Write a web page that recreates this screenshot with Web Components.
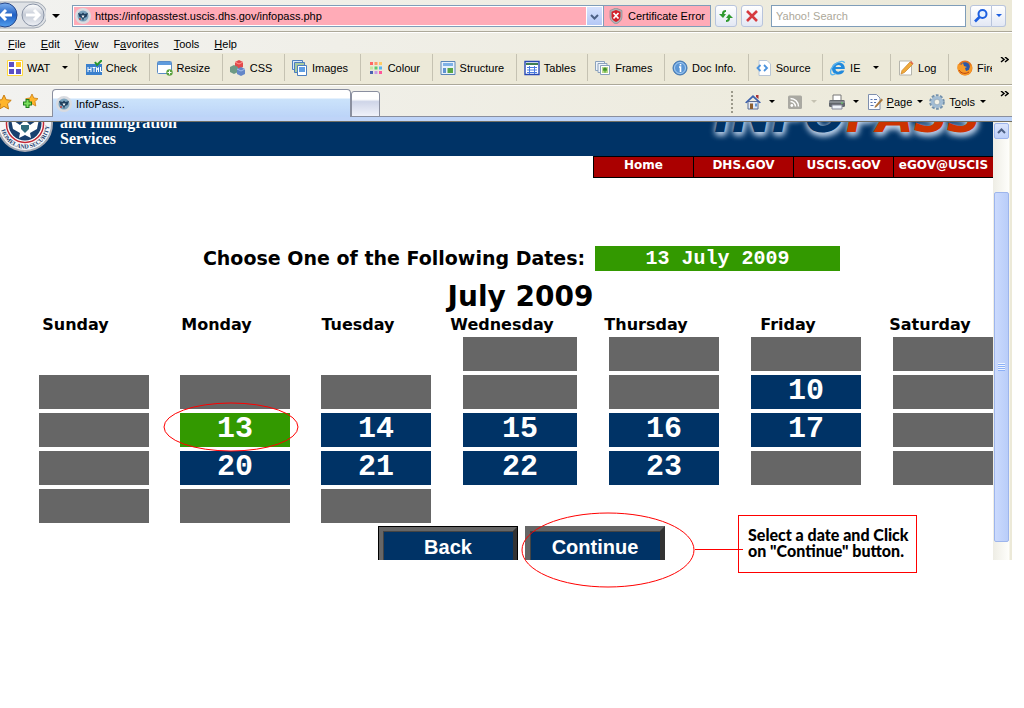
<!DOCTYPE html>
<html lang="en">
<head>
<meta charset="utf-8">
<title>InfoPass..</title>
<style>
  body {
    margin: 0;
    background: #fff;
    color: #000;
    font: 11px/14px "Liberation Sans", Arial, sans-serif;
  }
</style>
</head>
<body>
<info-window></info-window>

<script>
const ICONS = {
  seal: `<circle cx="8" cy="8" r="8" fill="#d9dbe0"/><circle cx="8" cy="8" r="5.500" fill="#7ba3bd"/><path d="M3 5l3.500 1L8 4.500 9.500 6 13 5l-1.500 4L9 10l-1 3-1-3-2.500-1z" fill="#20405f"/><path d="M6.500 7.500h3L8 10z" fill="#fff"/><circle cx="5" cy="11" r="1" fill="#b44"/>`,
  shield: `<path d="M8 0l6 2.500v6c0 3.500-2.500 6-6 7.500-3.500-1.500-6-4-6-7.500v-6z" fill="#aeb4b8" stroke="#7d858a" stroke-width=".6"/><path d="M8 2l4.500 1.800v4.500c0 2.700-1.800 4.600-4.500 5.700-2.700-1.100-4.500-3-4.500-5.700V3.800z" fill="#d2202b"/><path d="M5.500 5l5 5.500m0-5.500l-5 5.500" stroke="#fff" stroke-width="1.800"/>`,
  refresh: `<path d="M4 8V5.500C4 3 5.500 2 8 2v2c-1.300 0-1.800.6-1.800 1.800V6H8L5 10 1 6h3z" fill="#2f9a2f"/><path d="M12 7v3.500c0 2.500-1.500 3.500-4 3.500v-2c1.300 0 1.800-.6 1.800-1.800V10H8l3-4 4 4h-3z" fill="#2f9a2f"/>`,
  stop: `<path d="M3 3l10 10M13 3L3 13" stroke="#d63b40" stroke-width="2.600"/>`,
  search: `<circle cx="9.500" cy="6" r="4" fill="#e7f2ff" stroke="#1d5fe0" stroke-width="2"/><path d="M6.500 9L2 13.500" stroke="#1d5fe0" stroke-width="2.600"/>`,
  wat: `<path d="M.5.5h15v15H.5z" fill="#fff" stroke="#ffd83d"/><path d="M2 2h5v5H2zM9 9h5v5H9z" fill="#5c4fc4"/><path d="M9 2h5v5H9z" fill="#ffc629"/><path d="M2 9h5v5H2z" fill="#5c4fc4"/>`,
  check: `<path d="M0 4h16v11H0z" fill="#3a80cd"/><path d="M2 7v5m3-5v5M2 9.500h3M6.500 7.500h3M8 7v5m2.500 0V7.500l1 2 1-2V12m2-5v4.500H16" stroke="#fff" fill="none"/><path d="M9 2l2 3 5-5" stroke="#29962e" stroke-width="2" fill="none"/>`,
  resize: `<rect x=".5" y="1.500" width="14" height="12" rx="1" fill="#fff" stroke="#5b8cc6"/><path d="M1 2h13v3H1z" fill="#5f9bdc"/><circle cx="12.500" cy="12.500" r="3.200" fill="#5aa23d"/><path d="M12.500 10.500v4m-2-2h4" stroke="#fff"/>`,
  css: `<path d="M5 2l4-2 4 2v5L9 9 5 7z" fill="#e34a4a"/><path d="M0 7l4-2 4 2v5l-4 2-4-2z" fill="#6d9a85"/><path d="M7 9l4-2 4 2v5l-4 2-4-2z" fill="#6487c8"/><path d="M5 2l4 2 4-2" stroke="#ff9b94" fill="none"/><path d="M7 9l4 2 4-2" stroke="#a6bfeb" fill="none"/>`,
  images: `<path d="M.5.500h10v9H.5z" fill="#d9e9fa" stroke="#4c7fbf"/><path d="M2.500 2.500h10v10h-10z" fill="#a9ca9f" stroke="#4c7fbf"/><path d="M5.500 5.500h9v10h-9z" fill="#fff" stroke="#4c7fbf"/><path d="M7 7h6v5H7z" fill="#5f9ee4"/>`,
  colour: `<path d="M2 2h3v3H2z" fill="#f66"/><path d="M6.500 2h3v3h-3z" fill="#f96"/><path d="M11 2h3v3h-3z" fill="#fc6"/><path d="M2 6.500h3v3H2z" fill="#c6e6a0"/><path d="M6.500 6.500h3v3h-3z" fill="#5ccb6b"/><path d="M11 6.500h3v3h-3z" fill="#58b4f0"/><path d="M2 11h3v3H2z" fill="#4a63b0"/><path d="M6.500 11h3v3h-3z" fill="#c99ae6"/><path d="M11 11h3v3h-3z" fill="#f59"/>`,
  structure: `<path d="M1 1.500h14v13H1z" fill="#e8f1fb" stroke="#5b86b8"/><path d="M3 3h10v3H3z" fill="#7fb1e6"/><path d="M3 8h3v5H3z" fill="#5f93d0"/><path d="M7.500 8H13v5H7.500z" fill="#5aa646"/>`,
  tables: `<path d="M1 1.500h14v13H1z" fill="#fff" stroke="#2748b5" stroke-width="1.400"/><path d="M2 3h12v2H2z" fill="#3f7d52"/><path d="M3 7.500h10M3 10h10M3 12.500h10M5.500 6v8M10.500 6v8" stroke="#4a7be0"/>`,
  frames: `<path d="M.5 1.500h9v9h-9z" fill="#eef3f9" stroke="#8ba2bd"/><path d="M3 3.500h9v9H3z" fill="#eef3f9" stroke="#8ba2bd"/><path d="M5.500 5.500h9v9h-9z" fill="#fff" stroke="#8ba2bd"/><path d="M7 7h6v6H7z" fill="#b9d88b"/><circle cx="10" cy="9.500" r="2" fill="#3f8f2f"/><path d="M10 10v3" stroke="#6b4"/>`,
  info: `<circle cx="8" cy="8" r="7" fill="#5c97d6" stroke="#3f73ad"/><circle cx="8" cy="8" r="5.500" fill="none" stroke="#a9cdf0"/><path d="M7 7h1.500v5M8.500 4v1.500" stroke="#fff" stroke-width="1.600" fill="none"/>`,
  source: `<path d="M3 .5h8l3.500 3.500v11.500H3z" fill="#fff" stroke="#b9c6d6"/><path d="M4.500 5L1.500 8l3 3M8 5l3 3-3 3" stroke="#4b93dd" stroke-width="1.800" fill="none"/>`,
  ie: `<path d="M14.800 9H5.500c.2 1.800 1.300 2.700 2.900 2.700 1.100 0 1.900-.4 2.400-1.200h3.600c-.9 2.600-3 4-6.100 4C4.500 14.500 2 12.200 2 8.500 2 5 4.600 2.500 8.400 2.500c4.300 0 6.600 2.500 6.400 6.500zM5.600 7h5.600c-.2-1.300-1.200-2.100-2.700-2.100S5.900 5.700 5.600 7z" fill="#2189dc"/><path d="M14.500 3C14 .5 10 1 6 3.500S-.5 11 1 14c1 1.500 3.500.5 5-.5" stroke="#5bb5ee" stroke-width="1.400" fill="none"/>`,
  log: `<path d="M1.500 1h12v14h-12z" fill="#fff" stroke="#b5b5ad"/><path d="M4 10.500L12 2l2.500 2.500-8 8L3 14z" fill="#f0aa3c" stroke="#c78326" stroke-width=".7"/><path d="M12 2l1-1 2.500 2.500-1 1z" fill="#e6664f"/>`,
  firefox: `<circle cx="8" cy="8" r="7.500" fill="#e2711d"/><circle cx="8" cy="7" r="4.800" fill="#2d58a5"/><path d="M1 4l3 1 2-2 1 3 3 1-2 1 1 3 3-1 2-6c2 4 1 8-2 10.500-3 1.500-7 1-9.500-2S0 6 1 4z" fill="#f79a28"/><path d="M2 10c2 4 7 4 10 2" stroke="#b8400e" fill="none"/>`,
  star: `<path d="M8 1l2.200 4.700 5 .6-3.700 3.500 1 5.200L8 12.400 3.500 15l1-5.200L.8 6.300l5-.6z" fill="#ffb52b" stroke="#c97e14"/>`,
  addstar: `<path d="M10 0l1.800 4 4.200.6-3 3 .8 4.400L10 9.800 6 12l.8-4.400-3-3L8 4z" fill="#ffb52b" stroke="#c97e14" stroke-width=".8"/><path d="M5.500 5v9M1 9.500h9" stroke="#1d7d1d" stroke-width="4"/><path d="M5.500 6v7M2 9.500h7" stroke="#7be05c" stroke-width="2"/>`,
  home: `<path d="M3 7.500h10V15H3z" fill="#e4eaf5" stroke="#5d6f94"/><path d="M0 8.500L8 1l8 7.500-1.500.8L8 3.500 1.500 9.300z" fill="#3e62ad"/><path d="M11 1h2.500v4L11 3z" fill="#a33"/><path d="M5 9.500h3V15H5z" fill="#8d5f30"/><path d="M10 9.500h2v3h-2z" fill="#5d95d8"/>`,
  feed: `<rect x="1" y="1.500" width="14" height="13.500" rx="1.500" fill="#aaa9a2"/><circle cx="4.800" cy="11.500" r="1.400" fill="#fff"/><path d="M3.500 7.500a5 5 0 0 1 5 5M3.500 4.500a8 8 0 0 1 8 8" stroke="#fff" stroke-width="1.500" fill="none"/>`,
  printer: `<path d="M4 1h8v6H4z" fill="#fff" stroke="#777"/><rect x="0" y="6" width="16" height="7" rx="1.500" fill="#62666c"/><path d="M0 8h16" stroke="#a9adb3"/><path d="M3 11h10v4H3z" fill="#eef2f8" stroke="#889"/><path d="M12 9h2" stroke="#6d6"/>`,
  page: `<path d="M1.500.5h8L13 4v11.500H1.500z" fill="#fbfcff" stroke="#7e8fae"/><path d="M3.500 5.500h2m1.500 0h3M3.500 8.500h2m1.500 0h2M3.500 11.500h3" stroke="#5a76b0" stroke-width="1.200"/><path d="M8 12l6.500-7.500 1.500 1.500-6.500 7L7.500 14z" fill="#a9773c"/>`,
  gear: `<circle cx="8" cy="8" r="6.500" fill="none" stroke="#7592ad" stroke-width="2.600" stroke-dasharray="2.700 1.400"/><circle cx="8" cy="8" r="4.400" fill="none" stroke="#a3bdd4" stroke-width="3.400"/><circle cx="8" cy="8" r="2.800" fill="#f3f1e6" stroke="#7592ad" stroke-width=".6"/>`,
};

class UiIcon extends HTMLElement {
  connectedCallback() {
    this.attachShadow({ mode: 'open' }).innerHTML = `
      <style>
        :host { display: block; flex: none; width: 16px; height: 16px; }
        svg { display: block; width: 100%; height: 100%; }
      </style>
      <svg viewBox="0 0 16 16" aria-hidden="true">${ICONS[this.getAttribute('name')] || ''}</svg>
    `;
  }
}

class DropArrow extends HTMLElement {
  connectedCallback() {
    this.attachShadow({ mode: 'open' }).innerHTML = `
      <style>
        :host {
          display: block;
          flex: none;
          border: 3px solid transparent;
          border-top-color: currentColor;
          border-bottom: 0;
        }
      </style>
    `;
  }
}

class MoreChevron extends HTMLElement {
  connectedCallback() {
    this.attachShadow({ mode: 'open' }).innerHTML = `
      <style>
        :host { display: block; flex: none; width: 12px; height: 8px; }
        svg { display: block; }
      </style>
      <svg width="9" height="6" aria-hidden="true">
        <path d="M1 0l3 2.500L1 5M5 0l3 2.500L5 5" fill="none" stroke="#000" stroke-width="1.500"/>
      </svg>
    `;
  }
}

class ToolButton extends HTMLElement {
  connectedCallback() {
    const drop = this.hasAttribute('drop') ? '<drop-arrow></drop-arrow>' : '';
    const bare = this.childNodes.length === 0 ? 'bare' : '';
    this.attachShadow({ mode: 'open' }).innerHTML = `
      <style>
        :host { display: flex; }
        button {
          display: flex;
          align-items: center;
          gap: 4px;
          width: 100%;
          padding: 0;
          border: 0;
          background: none;
          color: inherit;
          font: inherit;
          white-space: nowrap;
        }
        .bare { gap: 0; }
        drop-arrow { margin-left: 8px; }
      </style>
      <button type="button" class="${bare}">
        <ui-icon name="${this.getAttribute('icon')}"></ui-icon>
        <slot></slot>${drop}
      </button>
    `;
  }
}

class AddressBar extends HTMLElement {
  connectedCallback() {
    this.attachShadow({ mode: 'open' }).innerHTML = `
      <style>
        :host {
          display: flex;
          align-items: center;
          height: 31px;
          padding-right: 6px;
          border-bottom: 1px solid #aca899;
        }
        .nav { flex: none; display: block; }
        .nav + drop-arrow { margin: 0 12px 0 6px; border-width: 4px 4px 0; }
        .box {
          flex: 1;
          display: flex;
          align-items: center;
          box-sizing: border-box;
          height: 22px;
          border: 1px solid #7f9db9;
          background: #ffabb7;
          box-shadow: inset 0 0 0 1px #fff;
          padding-left: 2px;
        }
        input { font: inherit; box-sizing: border-box; border-radius: 0; outline: 0; }
        .box input { flex: 1; min-width: 0; border: 0; background: none; padding: 0 4px; }
        .pick {
          width: 17px;
          height: 20px;
          padding: 0;
          border: 1px solid #fff;
          background: linear-gradient(#d6e2fd, #b4c8f6);
        }
        .cert {
          display: flex;
          align-items: center;
          gap: 4px;
          box-sizing: border-box;
          width: 107px;
          height: 22px;
          padding: 0 4px;
          border: 1px solid #7f9db9;
          border-left: 0;
          background: #ffabb7;
          font: inherit;
          white-space: nowrap;
        }
        .square {
          display: flex;
          align-items: center;
          justify-content: center;
          width: 22px;
          height: 22px;
          padding: 0;
          margin-left: 4px;
          border: 1px solid #b8c4dc;
          border-radius: 3px;
          background: linear-gradient(#fff, #e3e8f4);
        }
        .find { width: 195px; height: 22px; margin-left: 8px; padding: 0 4px; border: 1px solid #7f9db9; background: #fff; }
        .find::placeholder { color: #aca899; opacity: 1; }
        .left { border-radius: 3px 0 0 3px; }
        .right { width: 14px; margin: 0; border-left: 0; border-radius: 0 3px 3px 0; color: #1d5fe0; }
      </style>
      <svg class="nav" width="46" height="31" role="img" aria-label="Back and forward">
        <defs>
          <linearGradient id="b" x2="0" y2="1"><stop stop-color="#7fb0ee"/><stop offset=".5" stop-color="#1f5fc4"/><stop offset="1" stop-color="#53a0ee"/></linearGradient>
          <linearGradient id="f" x2="0" y2="1"><stop stop-color="#fff"/><stop offset=".5" stop-color="#c5cbd6"/><stop offset="1" stop-color="#eef1f6"/></linearGradient>
        </defs>
        <path d="M0 2h34a13 13 0 0 1 0 26H0z" fill="#dfe2e6" stroke="#a2a9b3"/>
        <circle cx="5" cy="15" r="12" fill="url(#b)" stroke="#27478a"/>
        <circle cx="33" cy="15" r="11" fill="url(#f)" stroke="#8993a5"/>
        <path d="M12 15H1m5-5l-5 5 5 5" fill="none" stroke="#fff" stroke-width="3"/>
        <path d="M26 15h13m-5-5l5 5-5 5" fill="none" stroke="#fff" stroke-width="3"/>
      </svg>
      <drop-arrow></drop-arrow>
      <div class="box">
        <ui-icon name="seal"></ui-icon>
        <input type="text" aria-label="Address" value="https://infopasstest.uscis.dhs.gov/infopass.php">
        <button class="pick" type="button" aria-label="Recent addresses">
          <svg width="9" height="6"><path d="M1 1l3.500 3.500L8 1" fill="none" stroke="#4d6185" stroke-width="2"/></svg>
        </button>
      </div>
      <button class="cert" type="button"><ui-icon name="shield"></ui-icon>Certificate Error</button>
      <button class="square" type="button" aria-label="Refresh"><ui-icon name="refresh"></ui-icon></button>
      <button class="square" type="button" aria-label="Stop"><ui-icon name="stop"></ui-icon></button>
      <input class="find" type="text" aria-label="Search" placeholder="Yahoo! Search">
      <button class="square left" type="button" aria-label="Search"><ui-icon name="search"></ui-icon></button>
      <button class="square right" type="button" aria-label="Search options"><drop-arrow></drop-arrow></button>
    `;
  }
}

class MenuBar extends HTMLElement {
  connectedCallback() {
    this.attachShadow({ mode: 'open' }).innerHTML = `
      <style>
        :host { display: flex; gap: 15px; box-sizing: border-box; height: 21px; padding: 1px 8px 0; border-top: 1px solid #fff; }
        button { padding: 0; border: 0; background: none; font: inherit; }
      </style>
      <button type="button"><u>F</u>ile</button>
      <button type="button"><u>E</u>dit</button>
      <button type="button"><u>V</u>iew</button>
      <button type="button">F<u>a</u>vorites</button>
      <button type="button"><u>T</u>ools</button>
      <button type="button"><u>H</u>elp</button>
    `;
  }
}

class DevToolbar extends HTMLElement {
  connectedCallback() {
    this.attachShadow({ mode: 'open' }).innerHTML = `
      <style>
        :host { display: flex; height: 31px; background: #ece9d8; border-bottom: 1px solid #aca899; }
        .items { flex: 1; display: flex; align-items: stretch; padding: 1px 0 3px; }
        .items tool-button { flex: 1 0 auto; padding: 0 6px 0 7px; border-right: 1px solid #c5c2b2; }
        .items tool-button:first-child { padding-right: 4px; }
        .last { width: 35px; margin-left: 8px; padding-bottom: 2px; overflow: hidden; }
        more-chevron { margin: 4px 0 0 8px; }
      </style>
      <div class="items">
        <tool-button icon="wat" drop>WAT</tool-button>
        <tool-button icon="check">Check</tool-button>
        <tool-button icon="resize">Resize</tool-button>
        <tool-button icon="css">CSS</tool-button>
        <tool-button icon="images">Images</tool-button>
        <tool-button icon="colour">Colour</tool-button>
        <tool-button icon="structure">Structure</tool-button>
        <tool-button icon="tables">Tables</tool-button>
        <tool-button icon="frames">Frames</tool-button>
        <tool-button icon="info">Doc Info.</tool-button>
        <tool-button icon="source">Source</tool-button>
        <tool-button icon="ie" drop>IE</tool-button>
        <tool-button icon="log">Log</tool-button>
      </div>
      <tool-button class="last" icon="firefox">Fire</tool-button>
      <more-chevron></more-chevron>
    `;
  }
}

class TabRow extends HTMLElement {
  connectedCallback() {
    this.attachShadow({ mode: 'open' }).innerHTML = `
      <style>
        :host {
          display: flex;
          align-items: stretch;
          height: 31px;
          border-top: 1px solid #fff;
          border-bottom: 4px solid #bfd4f8;
          box-shadow: inset 0 -1px #8a8f9f;
        }
        .stars { display: flex; align-items: center; gap: 10px; width: 52px; }
        .stars ui-icon:first-child { margin-left: -4px; }
        .tab {
          display: flex;
          align-items: center;
          gap: 4px;
          box-sizing: border-box;
          width: 299px;
          margin-top: 3px;
          padding: 0 3px;
          border: 1px solid #8a8f9f;
          border-bottom: 0;
          border-radius: 4px 4px 0 0;
          background: linear-gradient(#fff 0 8px, #cbe3fb 9px, #bcd4f8);
          font: inherit;
        }
        .new {
          box-sizing: border-box;
          width: 29px;
          margin: 5px 0 0;
          border: 1px solid #8a8f9f;
          border-radius: 3px 3px 0 0;
          background: linear-gradient(#fff 0 30%, #cfd5e8 40%, #f0f2fa);
        }
        .tools { display: flex; align-items: center; margin-left: auto; }
        .grip { width: 2px; height: 22px; margin-right: 12px; background: repeating-linear-gradient(#9c9a8c 0 2px, transparent 2px 4px); }
        .tools drop-arrow { margin: 0 12px 0 8px; }
        .tools .print { margin: 0 8px; }
        .tools .tight { margin: 0 6px 0 5px; }
        .tools .off { color: #c5c2b2; }
        more-chevron { margin: 5px 0 0 8px; }
      </style>
      <div class="stars"><ui-icon name="star"></ui-icon><ui-icon name="addstar"></ui-icon></div>
      <button class="tab" type="button"><ui-icon name="seal"></ui-icon>InfoPass..</button>
      <button class="new" type="button" aria-label="New tab"></button>
      <div class="tools">
        <span class="grip"></span>
        <tool-button icon="home" aria-label="Home"></tool-button><drop-arrow></drop-arrow>
        <tool-button icon="feed" aria-label="Feeds"></tool-button><drop-arrow class="off"></drop-arrow>
        <tool-button icon="printer" aria-label="Print"></tool-button><drop-arrow class="print"></drop-arrow>
        <tool-button icon="page"><span><u>P</u>age</span></tool-button><drop-arrow class="tight"></drop-arrow>
        <tool-button icon="gear"><span>T<u>o</u>ols</span></tool-button><drop-arrow class="tight"></drop-arrow>
      </div>
      <more-chevron></more-chevron>
    `;
  }
}

class SiteHeader extends HTMLElement {
  connectedCallback() {
    this.attachShadow({ mode: 'open' }).innerHTML = `
      <style>
        :host {
          display: flex;
          align-items: flex-end;
          height: 34px;
          overflow: hidden;
          background: #036;
          color: #fff;
        }
        svg { flex: none; display: block; margin: 0 6px 4px 0; }
        .agency { padding-bottom: 9px; font: bold 16px/16px "Liberation Serif", "Times New Roman", serif; }
        .brand {
          margin: 0 12px 0 auto;
          padding-bottom: 13px;
          font: italic bold 48px/56px "DejaVu Sans", Verdana, sans-serif;
          color: #036;
          text-shadow: 0 2px 6px #cfe0f5, 2px 3px 6px #9fb8d4;
        }
        .brand b { color: #c30; }
      </style>
      <svg width="54" height="56" role="img" aria-label="Homeland Security seal">
        <defs><path id="rim" d="M.5 28a24.500 24.500 0 0 0 49 0"/></defs>
        <circle cx="25" cy="28" r="28" fill="#a7abb5"/>
        <circle cx="25" cy="28" r="26" fill="#f5f6f8"/>
        <circle cx="25" cy="28" r="18.500" fill="#fff" stroke="#c22a36" stroke-width="1.500"/>
        <circle cx="25" cy="28" r="16.500" fill="#19406f"/>
        <path d="M25 24l5 5 9-6-2 10-7 4 1 5-6-3-6 3 1-5-7-4-2-10 9 6z" fill="#fff"/>
        <path d="M21 29h8v4l-4 4-4-4z" fill="#2f6b7c"/>
        <text font-family="Liberation Serif, serif" font-size="6" font-weight="bold" fill="#19406f"><textPath href="#rim" startOffset="6">HOMELAND SECURITY</textPath></text>
      </svg>
      <div class="agency">and Immigration<br>Services</div>
      <div class="brand">INFO<b>PASS</b></div>
    `;
  }
}

class SiteNav extends HTMLElement {
  connectedCallback() {
    this.attachShadow({ mode: 'open' }).innerHTML = `
      <style>
        :host { display: flex; justify-content: flex-end; }
        a {
          box-sizing: border-box;
          width: 100px;
          height: 22px;
          border: solid #000;
          border-width: 1px 0 1px 1px;
          background: #a00;
          color: #fff;
          font: bold 12px/16px "DejaVu Sans", Verdana, sans-serif;
          text-align: center;
          text-decoration: none;
        }
      </style>
      <a href="#home">Home</a><a href="#dhs">DHS.GOV</a><a href="#uscis">USCIS.GOV</a><a href="#egov">eGOV@USCIS</a>
    `;
  }
}

const DAYS = ['Sunday', 'Monday', 'Tuesday', 'Wednesday', 'Thursday', 'Friday', 'Saturday'];

// null: no cell at all, 0: day that can't be booked
const WEEKS = [
  [null, null, null, 0, 0, 0, 0],
  [0, 0, 0, 0, 0, 10, 0],
  [0, 13, 14, 15, 16, 17, 0],
  [0, 20, 21, 22, 23, 0, 0],
  [0, 0, 0, null, null, null, null],
];

class DateCalendar extends HTMLElement {
  connectedCallback() {
    this.attachShadow({ mode: 'open' });
    this.render(13);
  }

  cell(day, selected) {
    if (day === null) return '<td></td>';
    if (day === 0) return '<td><button type="button" disabled aria-label="Not available"></button></td>';
    return `<td><button type="button" class="${day === selected ? 'open selected' : 'open'}">${day}</button></td>`;
  }

  render(selected) {
    this.shadowRoot.innerHTML = `
      <style>
        :host { display: block; font-family: "DejaVu Sans", Verdana, sans-serif; font-weight: bold; }
        label { display: flex; align-items: center; justify-content: center; gap: 10px; padding-left: 50px; font-size: 19px; line-height: 25px; }
        input {
          box-sizing: border-box;
          width: 245px;
          height: 25px;
          padding: 0;
          border: 0;
          background: #390;
          color: #fff;
          font: bold 20px/24px "Liberation Mono", "Courier New", monospace;
          text-align: center;
        }
        table { table-layout: fixed; width: 996px; margin-left: 24px; border-collapse: collapse; }
        caption { width: 993px; margin-left: -24px; padding: 9px 0 1px 48px; box-sizing: border-box; font-size: 28px; line-height: 34px; }
        col { width: 142px; }
        .narrow { width: 141px; }
        .wide { width: 146px; }
        th { padding: 0 38px 0 0; height: 20px; font-size: 16px; line-height: 20px; }
        td { padding: 0 0 0 15px; height: 38px; }
        button {
          display: block;
          box-sizing: border-box;
          width: 110px;
          height: 34px;
          padding: 0 0 2px;
          border: 0;
          background: #666;
          color: #fff;
          font: bold 30px/32px "Liberation Mono", "Courier New", monospace;
        }
        td:nth-child(4) button { width: 114px; }
        .open { background: #036; }
        .selected { background: #390; }
      </style>
      <label>Choose One of the Following Dates: <input type="text" readonly value="${selected} July 2009"></label>
      <table>
        <caption>July 2009</caption>
        <colgroup><col class="narrow"><col class="narrow"><col><col class="wide"><col><col><col></colgroup>
        <thead><tr>${DAYS.map((day) => `<th scope="col">${day}</th>`).join('')}</tr></thead>
        <tbody>${WEEKS.map((week) => `<tr>${week.map((day) => this.cell(day, selected)).join('')}</tr>`).join('')}</tbody>
      </table>
    `;
    this.shadowRoot.querySelectorAll('.open').forEach((button) => {
      button.addEventListener('click', () => this.render(Number(button.textContent)));
    });
  }
}

class FormButtons extends HTMLElement {
  connectedCallback() {
    this.attachShadow({ mode: 'open' }).innerHTML = `
      <style>
        :host { display: flex; justify-content: center; gap: 7px; padding-left: 50px; }
        button {
          box-sizing: border-box;
          width: 140px;
          height: 42px;
          padding: 0;
          border: 5px solid;
          border-color: #666 #333 #333 #666;
          background: #036;
          box-shadow: inset 1px 1px #444;
          color: #fff;
          font: bold 20px/30px "Liberation Sans", Arial, sans-serif;
        }
        .default { outline: 1px solid #000; outline-offset: -1px; }
      </style>
      <button class="default" type="button">Back</button>
      <button type="button">Continue</button>
    `;
  }
}

class ViewScrollbar extends HTMLElement {
  connectedCallback() {
    this.attachShadow({ mode: 'open' }).innerHTML = `
      <style>
        :host {
          display: flex;
          flex-direction: column;
          box-sizing: border-box;
          width: 19px;
          padding: 1px 3px 0 1px;
          background: linear-gradient(90deg, #eeede5, #fefefb 16px, #ece9d8 17px);
        }
        .up, .thumb { box-sizing: border-box; border: 1px solid #9db5ec; border-radius: 2px; }
        .up { height: 16px; padding: 0; background: linear-gradient(#dbe5fd, #bed0f9); }
        .up svg { display: block; margin: auto; }
        .thumb {
          display: flex;
          align-items: center;
          justify-content: center;
          height: 350px;
          margin: 53px 0 auto;
          background: linear-gradient(90deg, #cbdafd, #b9cdf9);
        }
        .grip { width: 7px; height: 8px; background: repeating-linear-gradient(#eef4fe 0 1px, #8cb0f8 1px 2px); }
      </style>
      <button class="up" type="button" aria-label="Scroll up">
        <svg width="9" height="6"><path d="M1 5l3.500-3.500L8 5" fill="none" stroke="#4d6185" stroke-width="2"/></svg>
      </button>
      <div class="thumb"><span class="grip"></span></div>
    `;
  }
}

class CalloutNotes extends HTMLElement {
  connectedCallback() {
    this.attachShadow({ mode: 'open' }).innerHTML = `
      <style>
        :host { position: absolute; inset: 0; pointer-events: none; }
        svg { position: absolute; left: 0; top: 0; width: 100%; height: 100%; }
        p {
          position: absolute;
          left: 738px;
          top: 515px;
          box-sizing: border-box;
          width: 179px;
          height: 58px;
          margin: 0;
          padding: 11px 0 0 9px;
          border: 1px solid #f00;
          font: 900 16px/16px Lato, sans-serif;
          white-space: nowrap;
        }
      </style>
      <svg fill="none" stroke="#f00" aria-hidden="true">
        <ellipse cx="231" cy="427" rx="67" ry="24"/>
        <ellipse cx="608" cy="550" rx="86" ry="37"/>
        <path d="M695 549.500h48"/>
      </svg>
      <p><slot></slot></p>
    `;
  }
}

class InfoWindow extends HTMLElement {
  connectedCallback() {
    this.attachShadow({ mode: 'open' }).innerHTML = `
      <style>
        :host { display: block; position: relative; min-height: 100vh; overflow: hidden; }
        .browser { margin-right: 12px; }
        .chrome { background: linear-gradient(90deg, #f2f2f0, #ece9d8); border-bottom: 1px solid #716f64; }
        .view { display: flex; height: 438px; }
        .page { flex: 1; min-width: 0; overflow: hidden; }
        date-calendar { margin-top: 68px; }
        form-buttons { margin-top: 1px; }
      </style>
      <div class="browser">
        <div class="chrome">
          <address-bar></address-bar>
          <menu-bar></menu-bar>
          <dev-toolbar></dev-toolbar>
          <tab-row></tab-row>
        </div>
        <div class="view">
          <div class="page">
            <site-header></site-header>
            <site-nav></site-nav>
            <date-calendar></date-calendar>
            <form-buttons></form-buttons>
          </div>
          <view-scrollbar></view-scrollbar>
        </div>
      </div>
      <callout-notes>Select a date and Click<br>on "Continue" button.</callout-notes>
    `;
  }
}

customElements.define('ui-icon', UiIcon);
customElements.define('drop-arrow', DropArrow);
customElements.define('more-chevron', MoreChevron);
customElements.define('tool-button', ToolButton);
customElements.define('address-bar', AddressBar);
customElements.define('menu-bar', MenuBar);
customElements.define('dev-toolbar', DevToolbar);
customElements.define('tab-row', TabRow);
customElements.define('site-header', SiteHeader);
customElements.define('site-nav', SiteNav);
customElements.define('date-calendar', DateCalendar);
customElements.define('form-buttons', FormButtons);
customElements.define('view-scrollbar', ViewScrollbar);
customElements.define('callout-notes', CalloutNotes);
customElements.define('info-window', InfoWindow);
</script>
</body>
</html>
